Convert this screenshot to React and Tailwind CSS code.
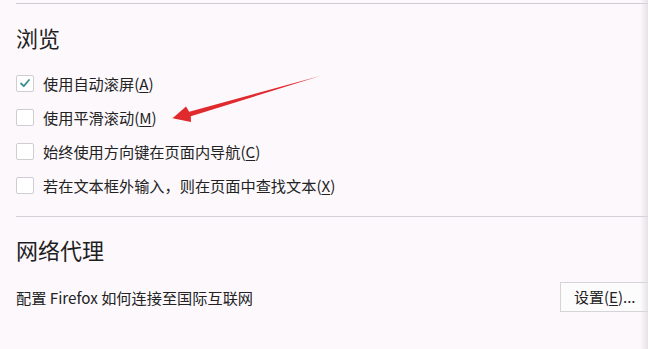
import React from "react";

const font = { fontFamily: '"Noto Sans CJK SC", "Noto Sans", sans-serif' };

const options = [
  { label: "使用自动滚屏", key: "A", checked: true },
  { label: "使用平滑滚动", key: "M", checked: false },
  { label: "始终使用方向键在页面内导航", key: "C", checked: false },
  { label: "若在文本框外输入，则在页面中查找文本", key: "X", checked: false },
];

function Checkbox({ checked }) {
  return (
    <div className="w-[18px] h-[17px] shrink-0 border border-[#cfcdd2] bg-white rounded-[2px] flex items-center justify-center">
      {checked && (
        <svg width="12" height="12" viewBox="0 0 12 12">
          <polyline
            points="2,6.5 4.8,9.2 10,3"
            fill="none"
            stroke="#3d8f8f"
            strokeWidth="1.8"
            strokeLinecap="round"
            strokeLinejoin="round"
          />
        </svg>
      )}
    </div>
  );
}

export default function App() {
  return (
    <div
      className="relative w-full h-[349px] overflow-hidden bg-[#fcf8fc] text-[#222]"
      style={font}
    >
      <div className="pt-[3px] pl-4">
        <div className="border-t border-[#cfcdd3]" />

        <h2 className="mt-[18px] text-[22px] leading-[30px] font-normal text-[#1e1e1e]">浏览</h2>

        <div className="mt-[14px]">
          {options.map((o) => (
            <div key={o.key} className="h-[34px] flex items-center gap-[9px]">
              <Checkbox checked={o.checked} />
              <span className="text-[15.2px] leading-5">
                {o.label}(<span className="underline underline-offset-2">{o.key}</span>)
              </span>
            </div>
          ))}
        </div>

        <div className="mt-[14px] border-t border-[#d3d1d6]" />

        <h2 className="mt-[17px] text-[22px] leading-[30px] font-normal text-[#1e1e1e]">网络代理</h2>

        <div className="mt-[18px] h-[30px] flex items-center">
          <span className="flex-1 text-[15.2px] leading-5">配置 Firefox 如何连接至国际互联网</span>
          <button className="w-[88px] h-[30px] shrink-0 border border-r-0 border-[#d6d4d9] bg-[#fdfcfd] text-left pl-[13px] text-[15px] leading-5 text-[#222]">
            设置(<span className="underline underline-offset-2">E</span>)...
          </button>
        </div>
      </div>

      <div className="absolute top-0 right-0 w-[8px] h-full bg-gradient-to-r from-[#fcf8fc00] to-[#dcd9dd] opacity-70 pointer-events-none" />

      <svg
        className="absolute left-0 top-0 pointer-events-none"
        width="648"
        height="349"
        viewBox="0 0 648 349"
      >
        <polygon
          points="172.5,118.3 186,106.5 189.2,111.8 320,76 190.8,116.2 191,122"
          fill="#e12a2e"
        />
      </svg>
    </div>
  );
}
